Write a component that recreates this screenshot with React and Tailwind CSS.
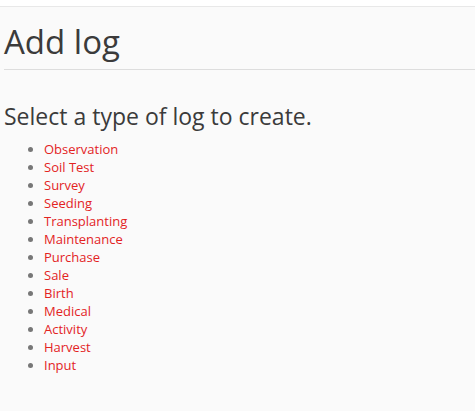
import React from 'react';

const types = [
  'Observation',
  'Soil Test',
  'Survey',
  'Seeding',
  'Transplanting',
  'Maintenance',
  'Purchase',
  'Sale',
  'Birth',
  'Medical',
  'Activity',
  'Harvest',
  'Input',
];

export default function App() {
  return (
    <div className="min-h-[411px] bg-white font-['Open_Sans',sans-serif]">
      <div className="h-[6px] bg-white" />
      <div className="min-h-[405px] border-t border-[#e8e8e8] bg-[#fafafa] pl-[4px]">
        {/* Title */}
        <h1 className="mt-[15px] border-b border-[#dddddd] pb-[7px] text-[33px] leading-[40px] text-[#3b3b3b]">
          Add log
        </h1>

        {/* Content */}
        <p className="mt-[30px] text-[23px] leading-[32px] text-[#3b3b3b]">
          Select a type of log to create.
        </p>
        <ul className="mt-[8px] list-disc pl-[40px] text-[13px] leading-[18px] text-[#777777]">
          {types.map((t) => (
            <li key={t}>
              <a href="#" className="text-[#e3231f]">
                {t}
              </a>
            </li>
          ))}
        </ul>
      </div>
    </div>
  );
}
